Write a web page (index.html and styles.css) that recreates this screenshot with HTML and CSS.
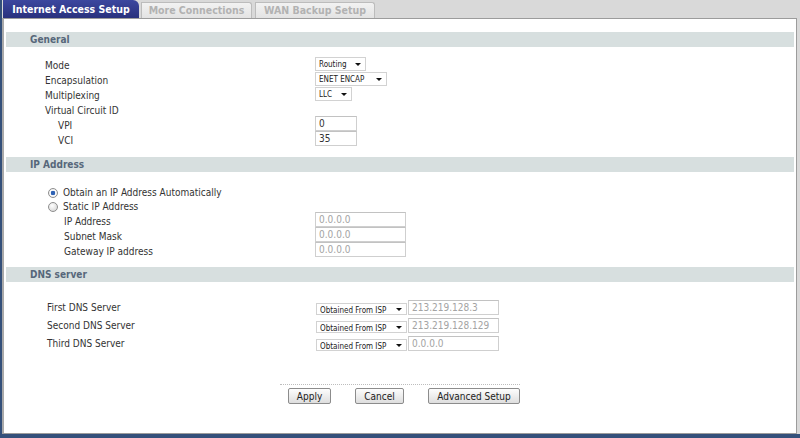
FILE: index.html
```html
<!DOCTYPE html>
<html lang="en">
<head>
	<meta charset="UTF-8">
	<title>Internet Access Setup</title>
	<link rel="stylesheet" href="styles.css">
</head>
<body>
	<div class="window">
		<div class="tabs">
			<a class="tab active tab-internet">Internet Access Setup</a>
			<a class="tab tab-more">More Connections</a>
			<a class="tab tab-wan">WAN Backup Setup</a>
		</div>
		<div class="panel">
			<!-- General -->
			<div class="band band-general">General</div>
			<div class="rows rows-general">
				<div class="row"><label>Mode</label><span class="sel w-routing"><select><option>Routing</option></select></span></div>
				<div class="row"><label>Encapsulation</label><span class="sel w-encap"><select><option>ENET ENCAP</option></select></span></div>
				<div class="row"><label>Multiplexing</label><span class="sel w-llc"><select><option>LLC</option></select></span></div>
				<div class="row"><label>Virtual Circuit ID</label><span></span></div>
				<div class="row"><label class="sub">VPI</label><input type="text" class="txt w-vc" value="0"></div>
				<div class="row"><label class="sub">VCI</label><input type="text" class="txt w-vc" value="35"></div>
			</div>
			<!-- IP Address -->
			<div class="band band-ip">IP Address</div>
			<div class="rows rows-ip">
				<div class="row radio-row"><label class="radio"><input type="radio" name="ipmode" checked>Obtain an IP Address Automatically</label></div>
				<div class="row radio-row"><label class="radio"><input type="radio" name="ipmode">Static IP Address</label></div>
				<div class="row"><label class="sub2">IP Address</label><input type="text" class="txt w-ip dim" value="0.0.0.0"></div>
				<div class="row"><label class="sub2">Subnet Mask</label><input type="text" class="txt w-ip dim" value="0.0.0.0"></div>
				<div class="row"><label class="sub2">Gateway IP address</label><input type="text" class="txt w-ip dim" value="0.0.0.0"></div>
			</div>
			<!-- DNS -->
			<div class="band band-dns">DNS server</div>
			<div class="rows rows-dns">
				<div class="row dns-row">
					<label class="dns-label">First DNS Server</label>
					<span class="dns-ctl"><span class="sel sel-dns w-dns"><select><option>Obtained From ISP</option></select></span><input type="text" class="txt w-dnsip dim" value="213.219.128.3"></span>
				</div>
				<div class="row dns-row">
					<label class="dns-label">Second DNS Server</label>
					<span class="dns-ctl"><span class="sel sel-dns w-dns"><select><option>Obtained From ISP</option></select></span><input type="text" class="txt w-dnsip dim" value="213.219.128.129"></span>
				</div>
				<div class="row dns-row">
					<label class="dns-label">Third DNS Server</label>
					<span class="dns-ctl"><span class="sel sel-dns w-dns"><select><option>Obtained From ISP</option></select></span><input type="text" class="txt w-dnsip dim" value="0.0.0.0"></span>
				</div>
			</div>
			<!-- buttons -->
			<div class="footer">
				<button type="button" class="btn w-apply">Apply</button>
				<button type="button" class="btn w-cancel">Cancel</button>
				<button type="button" class="btn w-adv">Advanced Setup</button>
			</div>
		</div>
	</div>
</body>
</html>
```

FILE: styles.css
```css
body{
	margin: 0;
	width: 800px;
	height: 438px;
	overflow: hidden;
	background-color: #34507a;
	font-family: "DejaVu Sans Condensed", "DejaVu Sans", sans-serif;
	font-size: 10px;
	color: #333;
}
.window{
	margin-left: 2px;
	height: 434px;
	background-color: #d9d9d9;
	display: flex;
	flex-direction: column;
}
.tabs{
	display: flex;
	align-items: flex-end;
	height: 18px;
	padding-left: 1px;
}
.tab{
	box-sizing: border-box;
	font-weight: bold;
	font-size: 10.5px;
	text-align: center;
	margin-right: 2px;
	height: 16px;
	line-height: 15px;
	color: #b2b2b2;
	background: linear-gradient(#f2f2f2, #e3e3e3);
	border: 1px solid #bcbcbc;
	border-bottom: none;
	border-radius: 0 3px 0 0;
}
.tab.active{
	height: 18px;
	line-height: 18px;
	color: #fff;
	border: none;
	background: linear-gradient(#3c479f, #29317d);
	border-radius: 0 6px 0 0;
}
.tab-internet{ width: 136px; }
.tab-more{ width: 111px; margin-right: 3px; }
.tab-wan{ width: 120px; }

.panel{
	flex: 1;
	background-color: #fff;
	border: 1px solid #9c9c9c;
	border-left: 2px solid #a9a9a9;
	margin-right: 3px;
	padding: 0 2px 0 2px;
}
.band{
	height: 15px;
	line-height: 15px;
	background-color: #d7dfdf;
	padding-left: 24px;
	font-weight: bold;
	color: #56677a;
}
.band-general{ margin-top: 13px; }
.band-ip{ margin-top: 11px; }
.band-dns{ margin-top: 10px; }

.rows-general{ padding-top: 9px; }
.rows-ip{ padding-top: 12px; }
.rows-dns{ padding-top: 16px; }

.row{
	display: grid;
	grid-template-columns: 270px auto;
	align-items: center;
	height: 15px;
	padding-left: 39px;
}
.rows-general label,
.rows-ip label{ padding-top: 3px; }
.radio-row{ height: 14px; }
.dns-row{ height: 18px; }
.row label.sub{ padding-left: 13px; }
.row label.sub2{ padding-left: 19px; }
.row label.dns-label{ padding-left: 2px; }

.radio{
	display: flex;
	align-items: center;
	padding-left: 3px;
}
.radio input{
	appearance: none;
	margin: 0 5px 0 0;
	width: 10px;
	height: 10px;
	border-radius: 50%;
	border: 1px solid #8e8e8e;
	background: radial-gradient(circle at 40% 35%, #fff, #cfcfcf);
	box-sizing: border-box;
}
.radio input:checked{
	background: radial-gradient(circle, #2f62b4 0, #2f62b4 2px, #fff 2.6px, #dadada 100%);
}

.sel{
	position: relative;
	display: inline-block;
	height: 14px;
	box-sizing: border-box;
	border: 1px solid #d2d2d2;
	background-color: #fff;
}
.sel select{
	appearance: none;
	border: none;
	background: transparent;
	margin: 0;
	padding: 0 0 0 3px;
	width: 100%;
	height: 12px;
	font-family: inherit;
	font-size: 8px;
	line-height: 12px;
	color: #222;
	outline: none;
}
.sel::after{
	content: "";
	position: absolute;
	right: 4px;
	top: 5px;
	border-left: 3px solid transparent;
	border-right: 3px solid transparent;
	border-top: 3px solid #111;
}
.w-routing{ width: 51px; }
.w-encap{ width: 72px; }
.w-llc{ width: 37px; }
.w-dns{ width: 91px; height: 12px; }
.sel-dns select{ height: 10px; line-height: 10px; }
.sel-dns::after{ top: 4px; }

.txt{
	box-sizing: border-box;
	height: 15px;
	margin: 0;
	padding: 0 3px;
	border: 1px solid #cfcfcf;
	border-top-color: #c2c2c2;
	font-family: inherit;
	font-size: 10px;
	color: #333;
	outline: none;
}
.txt.dim{ color: #a3a3a3; }
.w-vc{ width: 42px; }
.w-ip{ width: 91px; }
.w-dnsip{ width: 91px; margin-left: 1px; }

.dns-ctl{
	display: flex;
	align-items: flex-end;
	padding-left: 1px;
	height: 15px;
}

.footer{
	width: 240px;
	margin: 32px auto 0;
	padding-top: 3px;
	border-top: 1px dotted #bdbdbd;
	display: flex;
	justify-content: flex-end;
	gap: 24px;
}
.btn{
	height: 16px;
	padding: 0;
	font-family: inherit;
	font-size: 10px;
	color: #222;
	border: 1px solid #8c8c8c;
	border-radius: 2px;
	background: linear-gradient(#fdfdfd, #dedede);
	cursor: pointer;
}
.w-apply{ width: 43px; }
.w-cancel{ width: 49px; }
.w-adv{ width: 92px; }
```
